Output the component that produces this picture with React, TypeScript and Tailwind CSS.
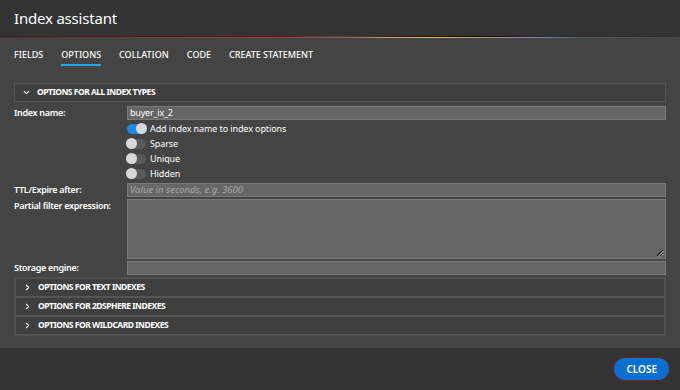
import { ChevronDown, ChevronRight } from "lucide-react";

const font = { fontFamily: '"Noto Sans", "Open Sans", sans-serif' };

function Toggle({ on, label }: { on?: boolean; label: string }) {
  return (
    <div className="flex h-[15px] items-center gap-[4px]">
      <div
        className={
          "relative h-[10px] w-[19px] shrink-0 rounded-full " +
          (on ? "bg-[#2389e8]" : "bg-[#5a5a5a]")
        }
      >
        <div
          className={
            "absolute top-[-0.5px] h-[11px] w-[11px] rounded-full bg-[#d9d9d9] " +
            (on ? "right-[-1px]" : "left-[-1px]")
          }
        />
      </div>
      <span className="whitespace-nowrap text-[9px] tracking-[-0.1px] text-white">{label}</span>
    </div>
  );
}

function Collapsed({ title }: { title: string }) {
  return (
    <div className="flex h-[19px] items-center gap-[6px] border border-[#555] bg-[#3f3f3f] pl-[7px]">
      <ChevronRight className="h-[9px] w-[9px] text-white" strokeWidth={3} />
      <span className="text-[8.5px] font-bold tracking-[-0.5px] text-white">{title}</span>
    </div>
  );
}

export default function App() {
  const tabs = ["FIELDS", "OPTIONS", "COLLATION", "CODE", "CREATE STATEMENT"];
  return (
    <div className="flex h-[390px] w-[680px] flex-col bg-[#444]" style={font}>
      {/* header */}
      <div className="flex h-[36px] items-center bg-[#333] px-[14px]">
        <h1 className="text-[15px] tracking-[-0.2px] text-white">Index assistant</h1>
      </div>
      <div className="h-px bg-[linear-gradient(90deg,#2b2b2b_0%,#2b2b2b_40%,#0b6b6e_50%,#0a1a5a_58%,#0a0a0a_70%,#5a1212_78%,#3a2a20_84%,#2e2e2e_100%)]" />
      <div className="h-px bg-[linear-gradient(90deg,#4a3030_0%,#d8302a_50%,#e8902a_56%,#f0c030_64%,#a0a080_72%,#4a90d8_80%,#4a6070_85%,#474747_100%)]" />

      {/* body */}
      <div className="flex flex-1 flex-col px-[14px]">
        <div className="flex h-[28px] items-end gap-[18px]">
          {tabs.map((t) => (
            <div key={t} className="flex flex-col items-stretch">
              <span className="text-[9px] font-medium leading-[14px] text-white">{t}</span>
              <div
                className={
                  "mt-[2px] h-[2px] " + (t === "OPTIONS" ? "bg-[#1ea4ee]" : "bg-transparent")
                }
              />
            </div>
          ))}
        </div>

        <div className="mt-[17px] flex h-[19px] items-center gap-[6px] border border-[#555] bg-[#3f3f3f] pl-[7px]">
          <ChevronDown className="h-[9px] w-[9px] text-white" strokeWidth={3} />
          <span className="text-[8.5px] font-bold tracking-[-0.5px] text-white">
            OPTIONS FOR ALL INDEX TYPES
          </span>
        </div>

        <div className="mt-[4px] grid grid-cols-[113px_1fr] text-[9px] text-white">
          <label className="font-semibold leading-[13px] tracking-[-0.3px]">Index name:</label>
          <div className="h-[14px] border border-[#7a7a7a] bg-[#666] px-[2px] leading-[12px] tracking-[-0.2px]">
            buyer_ix_2
          </div>

          <div />
          <div className="mt-[1px] flex flex-col">
            <Toggle on label="Add index name to index options" />
            <Toggle label="Sparse" />
            <Toggle label="Unique" />
            <Toggle label="Hidden" />
          </div>

          <label className="mt-[2px] font-semibold leading-[13px] tracking-[-0.3px]">TTL/Expire after:</label>
          <div className="mt-[2px] h-[14px] border border-[#7a7a7a] bg-[#666] px-[2px] text-[9.5px] leading-[12px] italic text-[#a8a8a8]">
            Value in seconds, e.g. 3600
          </div>

          <label className="mt-[2px] font-semibold leading-[13px] tracking-[-0.3px]">Partial filter expression:</label>
          <div className="relative mt-[2px] h-[60px] border border-[#7a7a7a] bg-[#666]">
            <svg className="absolute bottom-[1px] right-[1px]" width="8" height="8" viewBox="0 0 8 8">
              <path d="M7 1L1 7M7 4L4 7M7 6.5L6.5 7" stroke="#111" strokeWidth="1.2" />
              <path d="M7.5 2L2 7.5M7.5 5L5 7.5" stroke="#ddd" strokeWidth="0.8" />
            </svg>
          </div>

          <label className="mt-[2px] font-semibold leading-[13px] tracking-[-0.3px]">Storage engine:</label>
          <div className="mt-[2px] h-[14px] border border-[#7a7a7a] bg-[#666]" />
        </div>

        <div className="mt-[2px] flex flex-col border border-[#4f4f4f]">
          <Collapsed title="OPTIONS FOR TEXT INDEXES" />
          <Collapsed title="OPTIONS FOR 2DSPHERE INDEXES" />
          <Collapsed title="OPTIONS FOR WILDCARD INDEXES" />
        </div>
      </div>

      {/* footer */}
      <div className="flex h-[42px] items-center justify-end bg-[#333] px-[10px]">
        <button className="h-[24px] rounded-full border border-[#6a2222] bg-[#0b6fcf] px-[12px] text-[10px] font-semibold text-white">
          CLOSE
        </button>
      </div>
    </div>
  );
}
